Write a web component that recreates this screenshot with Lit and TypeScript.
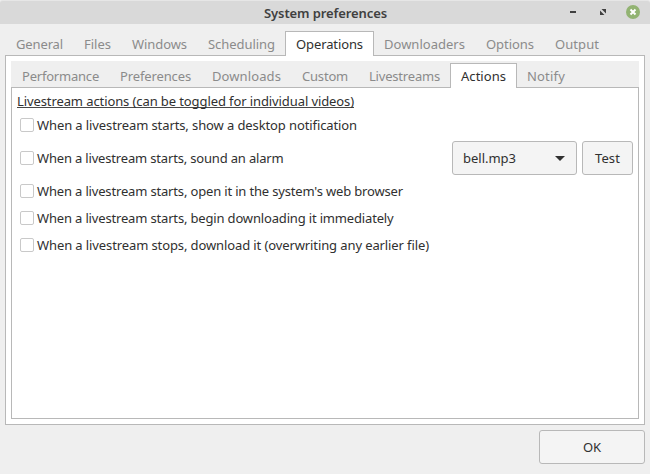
import { LitElement, html, css, svg } from "lit";
import { customElement, property, state } from "lit/decorators.js";
import { classMap } from "lit/directives/class-map.js";
import { styleMap } from "lit/directives/style-map.js";

const FAMILY = '"Noto Sans", "Open Sans", sans-serif';
const pen = document.createElement("canvas").getContext("2d")!;

/** Letter spacing that makes a line of text take up the given width. */
function tracking(text: string, width: number, font: string): string {
  pen.font = font;
  return `${((width - pen.measureText(text).width) / text.length).toFixed(3)}px`;
}

@customElement("fit-label")
class FitLabel extends LitElement {
  static styles = css`
    :host { display: inline-block; white-space: pre; }
    .text { display: block; }
  `;
  @property() text = "";
  @property({ type: Number }) width = 0;
  @property() weight = "400";
  render() {
    const letterSpacing = tracking(this.text, this.width, `${this.weight} 13px ${FAMILY}`);
    return html`<span class="text" style=${styleMap({ letterSpacing, width: `${this.width}px` })}>${this.text}</span>`;
  }
}

interface Tab { label: string; text: number; slot: number; }

@customElement("tab-strip")
class TabStrip extends LitElement {
  static styles = css`
    :host { display: flex; background: #efefef; color: #8b8b8b; }
    .tab {
      box-sizing: border-box; flex: none; height: 100%; padding: 2px 0 0 11px;
      display: flex; align-items: center; cursor: default;
    }
    .active {
      position: relative; z-index: 1; color: #303030; background: #fff;
      border: 1px solid #b8b8b8; border-bottom: 0; padding: 0 0 1px 10px;
      height: calc(100% + 1px); margin-right: -1px;
    }
  `;
  @property({ attribute: false }) tabs: Tab[] = [];
  @property() active = "";
  render() {
    return this.tabs.map((t) => {
      const on = t.label === this.active;
      return html`<div class=${classMap({ tab: true, active: on })}
        style=${styleMap({ width: `${t.slot + (on ? 1 : 0)}px` })}
        @click=${() => this.dispatchEvent(new CustomEvent("pick", { detail: t.label }))}>
        <fit-label .text=${t.label} .width=${t.text}></fit-label>
      </div>`;
    });
  }
}

const MAIN: Tab[] = [
  { label: "General", text: 47, slot: 68 },
  { label: "Files", text: 27, slot: 48 },
  { label: "Windows", text: 55, slot: 76 },
  { label: "Scheduling", text: 67, slot: 88 },
  { label: "Operations", text: 67, slot: 88 },
  { label: "Downloaders", text: 81, slot: 102 },
  { label: "Options", text: 48, slot: 69 },
  { label: "Output", text: 44, slot: 65 },
];
const SUB: Tab[] = [
  { label: "Performance", text: 77, slot: 98 },
  { label: "Preferences", text: 71, slot: 92 },
  { label: "Downloads", text: 69, slot: 90 },
  { label: "Custom", text: 46, slot: 67 },
  { label: "Livestreams", text: 71, slot: 92 },
  { label: "Actions", text: 45, slot: 66 },
  { label: "Notify", text: 38, slot: 60 },
];
const ROWS = [
  { label: "When a livestream starts, show a desktop notification", text: 320 },
  { label: "When a livestream starts, sound an alarm", text: 246.5, sound: true },
  { label: "When a livestream starts, open it in the system's web browser", text: 366 },
  { label: "When a livestream starts, begin downloading it immediately", text: 356.5 },
  { label: "When a livestream stops, download it (overwriting any earlier file)", text: 392 },
];

@customElement("app-root")
class AppRoot extends LitElement {
  static styles = css`
    :host {
      display: flex; flex-direction: column; box-sizing: border-box;
      width: 650px; height: 474px; overflow: hidden; background: #efefef;
      color: #303030; font: 13px/18px "Noto Sans", "Open Sans", sans-serif;
    }
    .titlebar {
      flex: none; height: 24px; box-sizing: border-box; border-top: 1px solid #e6e6e6;
      border-radius: 3px 3px 0 0; background: #d9d9d9;
      display: grid; grid-template-columns: 1fr auto 1fr; align-items: center;
      font-weight: 600; color: #404040; padding: 0 9px;
    }
    .title { grid-column: 2; margin-left: 1px; }
    .controls { display: flex; justify-content: flex-end; height: 23px; }
    .main-tabs { flex: none; height: 24px; margin: 7px 5px 0; }
    .panel {
      flex: none; box-sizing: border-box; height: 370px; margin: 0 5px; padding: 5px;
      border: 1px solid #b8b8b8; background: #fff;
    }
    .sub-tabs { height: 24px; padding-top: 2px; }
    .sheet { box-sizing: border-box; height: 332px; border: 1px solid #b8b8b8; padding: 5px; }
    .heading { height: 15px; display: flex; align-items: flex-start; }
    .heading-text { border-bottom: 1px solid #484848; line-height: 16px; height: 14px; }
    .rows { display: flex; flex-direction: column; gap: 5px; padding-top: 6px; }
    .row { display: flex; align-items: center; height: 22px; }
    .row.sound { height: 34px; }
    .row .text { flex: 1; }
    .check {
      box-sizing: border-box; width: 14px; height: 14px; margin: 0 3px;
      border: 1px solid #c9c9c9; border-radius: 2px; background: #fff;
    }
    .check.on { background: #8fb573; }
    .button {
      box-sizing: border-box; height: 34px; border: 1px solid #b8b8b8; border-radius: 3px;
      background: #f4f4f4; display: flex; align-items: center; justify-content: center;
    }
    .select { width: 125px; justify-content: space-between; padding: 0 11px 0 10px; margin-right: 5px; }
    .test { width: 51px; }
    .footer { display: flex; justify-content: flex-end; padding: 5px 5px 0; }
    .ok { width: 106px; }
  `;
  @state() private main = "Operations";
  @state() private sub = "Actions";
  @state() private checked = new Set<number>();

  private toggle(i: number) {
    const next = new Set(this.checked);
    next.has(i) ? next.delete(i) : next.add(i);
    this.checked = next;
  }

  render() {
    return html`
      <div class="titlebar">
        <fit-label class="title" .text=${"System preferences"} .width=${123} .weight=${"600"}></fit-label>
        <div class="controls">
          <svg width="80" height="23" viewBox="0 0 80 23">
            ${svg`
              <path d="M9 10h6v2H9z" fill="#404040" />
              <path d="M40.5 8H45v4.5zM39 9.5v4.5h4.5z" fill="#404040" />
              <circle cx="72" cy="11" r="7" fill="#92b372" />
              <path d="M69.5 8.5l5 5M74.5 8.5l-5 5" stroke="#fff" stroke-width="2" />
            `}
          </svg>
        </div>
      </div>
      <tab-strip class="main-tabs" .tabs=${MAIN} .active=${this.main}
        @pick=${(e: CustomEvent) => (this.main = e.detail)}></tab-strip>
      <div class="panel">
        <tab-strip class="sub-tabs" .tabs=${SUB} .active=${this.sub}
          @pick=${(e: CustomEvent) => (this.sub = e.detail)}></tab-strip>
        <div class="sheet">
          <div class="heading">
            <fit-label class="heading-text" .text=${"Livestream actions (can be toggled for individual videos)"} .width=${337}></fit-label>
          </div>
          <div class="rows">
            ${ROWS.map((r, i) => html`
              <div class=${classMap({ row: true, sound: !!r.sound })}>
                <span class=${classMap({ check: true, on: this.checked.has(i) })} @click=${() => this.toggle(i)}></span>
                <fit-label class="text" .text=${r.label} .width=${r.text}></fit-label>
                ${r.sound ? html`
                  <div class="button select">
                    <fit-label .text=${"bell.mp3"} .width=${53}></fit-label>
                    <svg width="10" height="5" viewBox="0 0 10 5"><path d="M0 0h10L5 5z" fill="#303030" /></svg>
                  </div>
                  <div class="button test"><fit-label .text=${"Test"} .width=${25}></fit-label></div>` : ""}
              </div>`)}
          </div>
        </div>
      </div>
      <div class="footer">
        <div class="button ok"><fit-label .text=${"OK"} .width=${18}></fit-label></div>
      </div>`;
  }
}
